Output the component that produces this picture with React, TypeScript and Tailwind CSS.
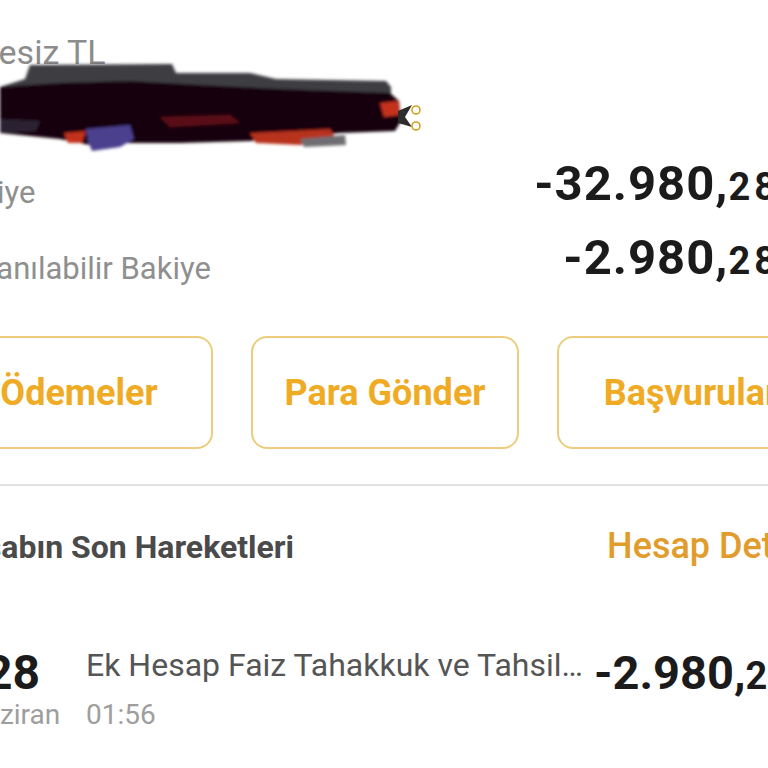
const Scribble = () => (
  <svg width="430" height="92" viewBox="0 0 430 92" className="block">
    <defs>
      <filter id="soft" x="-5%" y="-20%" width="110%" height="140%">
        <feGaussianBlur stdDeviation="1.4" />
      </filter>
    </defs>
    <g filter="url(#soft)">
      {/* grey upper stroke */}
      <path
        d="M0 26 L25 18 L30 4 L172 3 L176 12 L250 12 L276 18 L386 20 L391 26 L391 44 L0 44 Z"
        fill="#3d3d42"
      />
      {/* red left streak */}
      <path d="M0 40 L60 38 L70 48 L50 62 L0 64 Z" fill="#b3291d" />
      {/* main dark body */}
      <path
        d="M0 26 L60 22 L130 20 L200 24 L280 28 L390 32 L399 40 L401 60 L395 70 L340 72 L300 76 L250 80 L180 82 L120 82 L90 84 L60 78 L0 72 Z"
        fill="#14040a"
      />
      {/* red lower streaks */}
      <path d="M64 72 L86 70 L82 82 L68 82 Z" fill="#c2301f" />
      <path d="M160 56 L230 54 L240 62 L170 66 Z" fill="#5a0f16" />
      <path d="M250 72 L330 68 L336 78 L300 84 L256 82 Z" fill="#b8301e" />
      <path d="M380 42 L398 40 L400 54 L384 56 Z" fill="#c4331f" />
      {/* blue / purple streak */}
      <path d="M86 68 L130 64 L134 78 L120 86 L92 90 L88 80 Z" fill="#4b3f8e" />
      {/* grey lower bits */}
      <path d="M300 78 L345 74 L346 84 L304 86 Z" fill="#6e6e72" />
      <path d="M0 58 L40 60 L36 70 L0 72 Z" fill="#2a2230" />
    </g>
    {/* pen end */}
    <path d="M398 50 L412 44 L405 56 L412 66 L398 62 Z" fill="#2c2c2c" />
    <circle cx="416" cy="49" r="4" fill="#fff" stroke="#d4a020" strokeWidth="1.6" />
    <circle cx="416" cy="65" r="4" fill="#fff" stroke="#d4a020" strokeWidth="1.6" />
  </svg>
)

const Amount = ({
  whole,
  cents,
  className,
}: {
  whole: string
  cents: string
  className: string
}) => (
  <p
    className={`shrink-0 whitespace-nowrap font-bold leading-none text-[#1b1b1b] ${className}`}
  >
    {whole}
    <span className="text-[38px] tracking-[4px]">{cents}</span>
  </p>
)

const ActionButton = ({ label }: { label: string }) => (
  <button className="flex h-[113px] items-center justify-center whitespace-nowrap rounded-[16px] border-2 border-[#edcd7d] text-[36px] font-bold leading-none text-[#f0ab25]">
    {label}
  </button>
)

export default function App() {
  return (
    <div className="h-[768px] w-[768px] overflow-hidden bg-white font-['Roboto',sans-serif]">
      <div className="-ml-[55px] w-[880px]">
        {/* account header */}
        <p className="-ml-[5px] mt-[35px] text-[34px] leading-none text-[#8c8c8c]">
          Vadesiz TL
        </p>
        <div className="flex h-[90px] items-start">
          <div className="-mt-[8px] ml-[55px]">
            <Scribble />
          </div>
        </div>

        {/* balances */}
        <div className="flex items-start justify-between">
          <p className="mt-[18px] text-[31px] leading-none text-[#8f8f8f]">
            Bakiye
          </p>
          <Amount
            whole="-32.980,"
            cents="28"
            className="mr-[45px] text-[49px] tracking-[1px]"
          />
        </div>
        <div className="mt-[25px] flex items-start justify-between">
          <p className="mt-[20px] text-[31px] leading-none text-[#8f8f8f]">
            Kullanılabilir Bakiye
          </p>
          <Amount
            whole="-2.980,"
            cents="28"
            className="mr-[45px] text-[49px] tracking-[1px]"
          />
        </div>

        {/* quick actions */}
        <div className="mt-[52px] grid grid-cols-3 gap-[38px]">
          <ActionButton label="Ödemeler" />
          <ActionButton label="Para Gönder" />
          <ActionButton label="Başvurular" />
        </div>

        <div className="mt-[35px] h-[2px] bg-[#e2e2e2]" />

        {/* last transactions */}
        <div className="mt-[42px] flex items-baseline justify-between">
          <p className="text-[32px] font-bold leading-none text-[#4a4a4a]">
            Hesabın Son Hareketleri
          </p>
          <p className="mr-[5px] text-[36px] font-medium leading-none text-[#e29c2c]">
            Hesap Detayı
          </p>
        </div>

        <div className="mt-[85px] flex items-start">
          <div className="flex w-[135px] shrink-0 flex-col items-center">
            <p className="text-[48px] font-bold leading-none text-[#1b1b1b]">28</p>
            <p className="mt-[4px] text-[28px] leading-none text-[#9e9e9e]">Haziran</p>
          </div>
          <div className="ml-[6px] w-[508px] shrink-0">
            <p className="-mt-[3px] truncate text-[32px] leading-[38px] text-[#555555]">
              Ek Hesap Faiz Tahakkuk ve Tahsilatı
            </p>
            <p className="mt-[17px] text-[28px] leading-none text-[#9e9e9e]">01:56</p>
          </div>
          <Amount
            whole="-2.980,"
            cents="28"
            className="ml-auto mr-[36px] text-[47px]"
          />
        </div>
      </div>
    </div>
  )
}
